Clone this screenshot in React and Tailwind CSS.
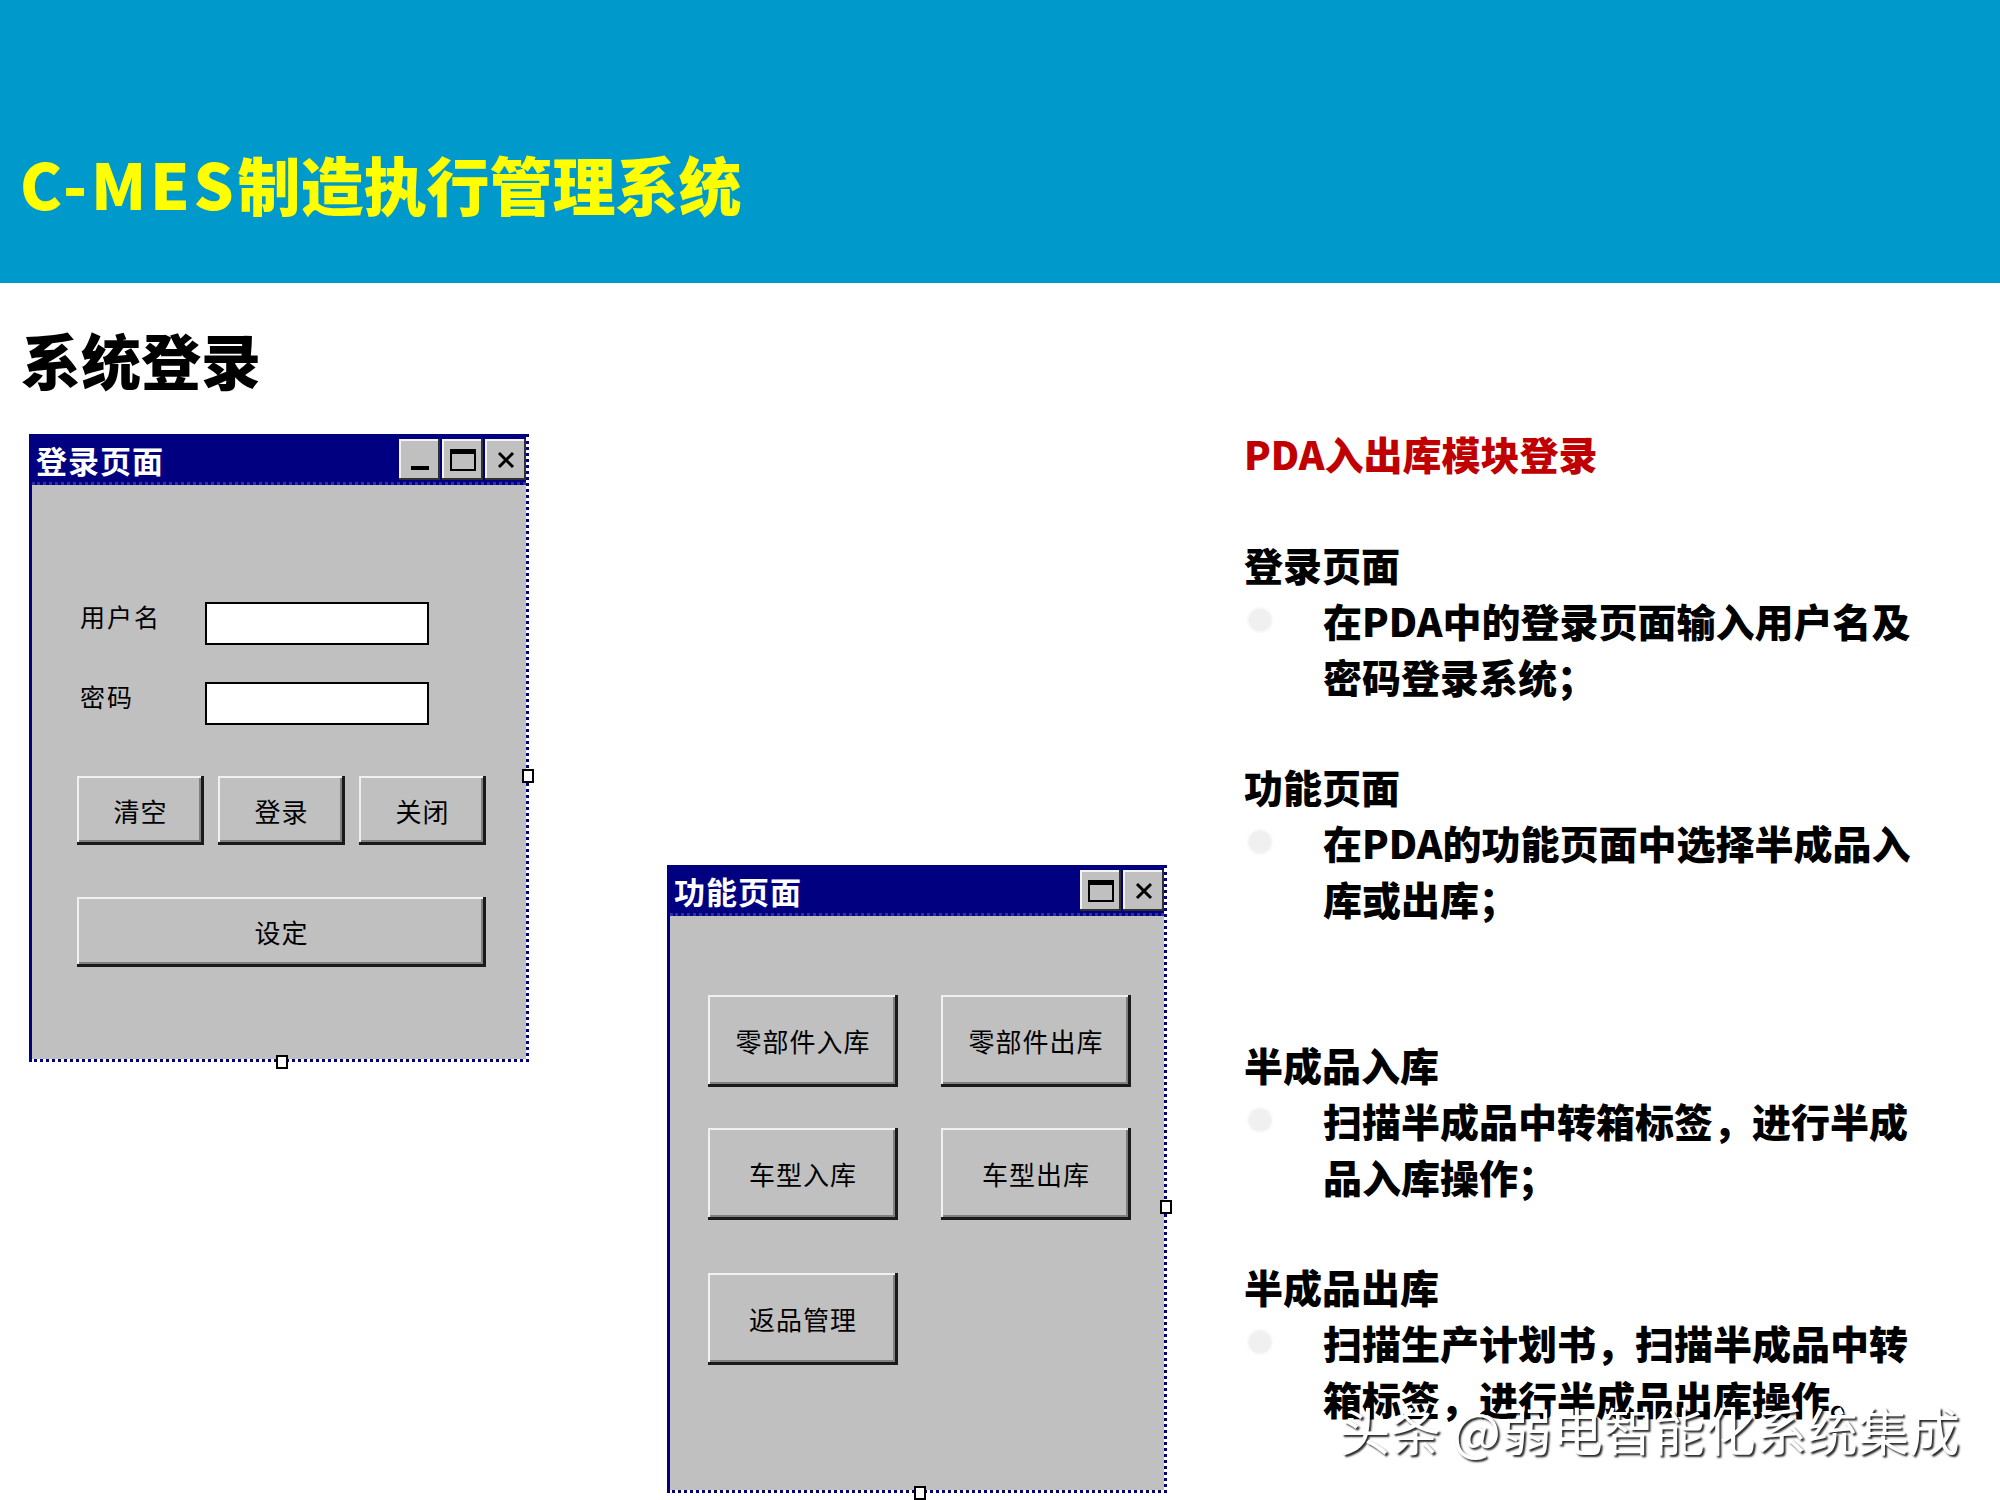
import React from "react";

const FONT = "font-['Noto_Sans_CJK_SC','Noto_Sans',sans-serif]";

function TitleBtn({ children }) {
  return (
    <div className="w-[41px] h-[41px] bg-[#c0c0c0] shadow-[inset_-2px_-2px_0_#303030,inset_2px_2px_0_#f4f4f4] flex items-center justify-center">
      {children}
    </div>
  );
}

function MinIcon() {
  return <div className="w-[18px] h-[4px] bg-black mt-[16px]" />;
}
function MaxIcon() {
  return <div className="w-[26px] h-[22px] border-2 border-black border-t-[5px]" />;
}
function CloseIcon() {
  return (
    <svg width="20" height="20" viewBox="0 0 20 20">
      <path d="M3 3 L17 17 M17 3 L3 17" stroke="#000" strokeWidth="3" />
    </svg>
  );
}

function WinButton({ children, className }) {
  return (
    <div
      className={
        "bg-[#c0c0c0] flex items-center justify-center text-[26px] tracking-[1px] leading-none text-black shadow-[inset_-3px_-3px_0_#1a1a1a,inset_2px_2px_0_#f0f0f0,inset_-5px_-5px_0_#808080] " +
        className
      }
    >
      {children}
    </div>
  );
}

function Handle({ className }) {
  return <div className={"absolute w-[12px] h-[14px] bg-white border-2 border-black " + className} />;
}

function Window({ title, buttons, className, children }) {
  return (
    <div
      className={
        "relative flex flex-col w-[500px] h-[628px] border-[3px] border-dotted border-[#000080] [border-left-style:solid] [border-top-style:solid] " +
        className
      }
    >
      <div className="h-[48px] bg-[#000080] flex items-center pl-[4px] pr-[0px] border-b-[3px] border-dotted border-[#3030a0]">
        <span className="text-white text-[31px] font-bold leading-none tracking-[1px]">{title}</span>
        <div className="ml-auto flex gap-[2px] items-center">{buttons}</div>
      </div>
      <div className="flex-1 bg-[#c0c0c0]">{children}</div>
    </div>
  );
}

function LoginWindow() {
  return (
    <Window
      title="登录页面"
      buttons={
        <>
          <TitleBtn>
            <MinIcon />
          </TitleBtn>
          <TitleBtn>
            <MaxIcon />
          </TitleBtn>
          <TitleBtn>
            <CloseIcon />
          </TitleBtn>
        </>
      }
    >
      <div className="pl-[45px] pt-[117px] flex flex-col">
        <div className="flex items-start">
          <span className="w-[128px] pl-[3px] text-[25px] tracking-[2px] leading-[28px] text-black">用户名</span>
          <div className="w-[224px] h-[43px] bg-white border-2 border-black" />
        </div>
        <div className="flex items-start mt-[37px]">
          <span className="w-[128px] pl-[3px] text-[25px] tracking-[2px] leading-[28px] text-black">密码</span>
          <div className="w-[224px] h-[43px] bg-white border-2 border-black" />
        </div>
        <div className="flex gap-[14px] mt-[51px]">
          <WinButton className="w-[127px] h-[69px]">清空</WinButton>
          <WinButton className="w-[127px] h-[69px]">登录</WinButton>
          <WinButton className="w-[127px] h-[69px]">关闭</WinButton>
        </div>
        <WinButton className="w-[409px] h-[70px] mt-[52px]">设定</WinButton>
      </div>
      <Handle className="right-[-8px] top-[332px]" />
      <Handle className="left-[244px] bottom-[-10px]" />
    </Window>
  );
}

function FuncWindow({ className }) {
  return (
    <Window
      title="功能页面"
      className={className}
      buttons={
        <>
          <TitleBtn>
            <MaxIcon />
          </TitleBtn>
          <TitleBtn>
            <CloseIcon />
          </TitleBtn>
        </>
      }
    >
      <div className="pl-[38px] pt-[79px] flex flex-col">
        <div className="flex gap-[43px]">
          <WinButton className="w-[190px] h-[92px]">零部件入库</WinButton>
          <WinButton className="w-[190px] h-[92px]">零部件出库</WinButton>
        </div>
        <div className="flex gap-[43px] mt-[41px]">
          <WinButton className="w-[190px] h-[92px]">车型入库</WinButton>
          <WinButton className="w-[190px] h-[92px]">车型出库</WinButton>
        </div>
        <WinButton className="w-[190px] h-[92px] mt-[53px]">返品管理</WinButton>
      </div>
      <Handle className="right-[-8px] top-[332px]" />
      <Handle className="left-[244px] bottom-[-10px]" />
    </Window>
  );
}

function Bullet({ lines }) {
  return (
    <div className="flex">
      <div className="w-[79px] shrink-0 flex">
        <div className="ml-[4px] mt-[16px] w-[24px] h-[24px] rounded-full bg-[#f0f0f0] blur-[1px]" />
      </div>
      <div className="flex flex-col">
        {lines.map((l, i) => (
          <div key={i} className="whitespace-nowrap">
            {l}
          </div>
        ))}
      </div>
    </div>
  );
}

export default function App() {
  return (
    <div className={"w-[2000px] h-[1500px] bg-white relative overflow-hidden " + FONT}>
      <header className="h-[283px] bg-[#0099cc] pt-[147px] pl-[20px]">
        <h1 className="text-[63px] leading-[72px] font-black text-[#ffff00] whitespace-nowrap">
          <span className="tracking-[0.06em]">C-MES</span>制造执行管理系统
        </h1>
      </header>
      <div className="flex">
        <div className="w-[1244px] shrink-0">
          <h2 className="ml-[21px] mt-[44px] text-[60px] leading-[64px] font-black text-black">系统登录</h2>
          <div className="flex items-start mt-[43px] ml-[29px]">
            <LoginWindow />
            <FuncWindow className="ml-[138px] mt-[431px]" />
          </div>
        </div>
        <div className="pt-[142px] text-[39px] leading-[56px] font-black text-black">
          <div className="text-[#c00000] whitespace-nowrap">PDA入出库模块登录</div>
          <div className="mt-[55px]">登录页面</div>
          <Bullet lines={["在PDA中的登录页面输入用户名及", "密码登录系统；"]} />
          <div className="mt-[54px]">功能页面</div>
          <Bullet lines={["在PDA的功能页面中选择半成品入", "库或出库；"]} />
          <div className="mt-[110px]">半成品入库</div>
          <Bullet lines={["扫描半成品中转箱标签，进行半成", "品入库操作；"]} />
          <div className="mt-[54px]">半成品出库</div>
          <Bullet lines={["扫描生产计划书，扫描半成品中转", "箱标签，进行半成品出库操作。"]} />
        </div>
      </div>
      <div className="absolute left-[1339px] top-[1397px] text-[51px] leading-[64px] text-white whitespace-nowrap [text-shadow:2px_2px_2px_rgba(0,0,0,0.85)]">
        头条 @弱电智能化系统集成
      </div>
    </div>
  );
}
